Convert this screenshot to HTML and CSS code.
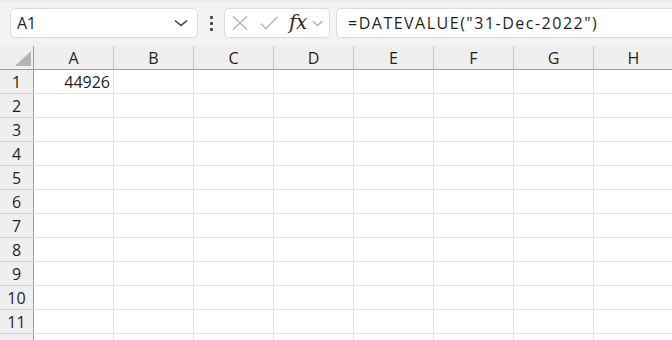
FILE: index.html
```html
<!DOCTYPE html>
<html>
<head>
<meta charset="utf-8">
<link rel="stylesheet" href="styles.css">
</head>
<body>
<div class="app">
  <div class="toolbar">
    <div class="namebox">
      <span class="name">A1</span>
      <svg class="chev" width="14" height="8" viewBox="0 0 14 8"><path d="M1 1.5 L7 6.5 L13 1.5" fill="none" stroke="#3a3a3a" stroke-width="1.4"/></svg>
    </div>
    <div class="dots"><span></span><span></span><span></span></div>
    <div class="iconbox">
      <svg class="ic" width="16" height="14" viewBox="0 0 16 14"><path d="M1 0.5 L15 13.5 M15 0.5 L1 13.5" stroke="#b4b4b4" stroke-width="1.3" fill="none"/></svg>
      <svg class="ic ck" width="18" height="14" viewBox="0 0 18 14"><path d="M0.8 7.5 L6 12.8 L17.2 1" stroke="#b4b4b4" stroke-width="1.3" fill="none"/></svg>
      <span class="fx">fx</span>
      <svg class="chev2" width="11" height="7" viewBox="0 0 11 7"><path d="M0.8 1.2 L5.5 5.5 L10.2 1.2" fill="none" stroke="#a8a8a8" stroke-width="1.2"/></svg>
    </div>
    <div class="formula">=DATEVALUE("31-Dec-2022")</div>
  </div>
  <div class="grid">
    <div class="corner"><div class="tri"></div></div>
    <div class="ch">A</div><div class="ch">B</div><div class="ch">C</div><div class="ch">D</div><div class="ch">E</div><div class="ch">F</div><div class="ch">G</div><div class="ch">H</div>
    <div class="rh">1</div><div class="c num">44926</div><div class="c"></div><div class="c"></div><div class="c"></div><div class="c"></div><div class="c"></div><div class="c"></div><div class="c"></div>
    <div class="rh">2</div><div class="c"></div><div class="c"></div><div class="c"></div><div class="c"></div><div class="c"></div><div class="c"></div><div class="c"></div><div class="c"></div>
    <div class="rh">3</div><div class="c"></div><div class="c"></div><div class="c"></div><div class="c"></div><div class="c"></div><div class="c"></div><div class="c"></div><div class="c"></div>
    <div class="rh">4</div><div class="c"></div><div class="c"></div><div class="c"></div><div class="c"></div><div class="c"></div><div class="c"></div><div class="c"></div><div class="c"></div>
    <div class="rh">5</div><div class="c"></div><div class="c"></div><div class="c"></div><div class="c"></div><div class="c"></div><div class="c"></div><div class="c"></div><div class="c"></div>
    <div class="rh">6</div><div class="c"></div><div class="c"></div><div class="c"></div><div class="c"></div><div class="c"></div><div class="c"></div><div class="c"></div><div class="c"></div>
    <div class="rh">7</div><div class="c"></div><div class="c"></div><div class="c"></div><div class="c"></div><div class="c"></div><div class="c"></div><div class="c"></div><div class="c"></div>
    <div class="rh">8</div><div class="c"></div><div class="c"></div><div class="c"></div><div class="c"></div><div class="c"></div><div class="c"></div><div class="c"></div><div class="c"></div>
    <div class="rh">9</div><div class="c"></div><div class="c"></div><div class="c"></div><div class="c"></div><div class="c"></div><div class="c"></div><div class="c"></div><div class="c"></div>
    <div class="rh">10</div><div class="c"></div><div class="c"></div><div class="c"></div><div class="c"></div><div class="c"></div><div class="c"></div><div class="c"></div><div class="c"></div>
    <div class="rh">11</div><div class="c"></div><div class="c"></div><div class="c"></div><div class="c"></div><div class="c"></div><div class="c"></div><div class="c"></div><div class="c"></div>
    <div class="rh"></div><div class="c"></div><div class="c"></div><div class="c"></div><div class="c"></div><div class="c"></div><div class="c"></div><div class="c"></div><div class="c"></div>
  </div>
</div>
</body>
</html>
```
FILE: styles.css
```css
* { box-sizing: border-box; }
html, body { margin: 0; padding: 0; background: #fff; }
body { width: 672px; height: 340px; overflow: hidden; font-family: "Open Sans", "Noto Sans", sans-serif; color: #1f1f1f; }
.app { width: 672px; height: 340px; overflow: hidden; }

.toolbar {
  height: 46px;
  background: #f3f3f3;
  border-top: 2px solid #ebebeb;
  display: flex;
  align-items: flex-start;
  padding: 6px 0 0 10px;
  white-space: nowrap;
}
.namebox {
  width: 188px;
  height: 30px;
  background: #fff;
  border: 1px solid #dadada;
  border-radius: 5px;
  display: flex;
  align-items: center;
  justify-content: space-between;
  padding: 0 9px 0 6px;
  flex: none;
}
.name { font-size: 16px; color: #1f1f1f; }
.chev { display: block; }
.dots {
  width: 26px;
  height: 30px;
  display: flex;
  flex-direction: column;
  align-items: center;
  justify-content: center;
  gap: 3px;
  flex: none;
}
.dots span { width: 3px; height: 3px; background: #444; border-radius: 1px; display: block; }
.iconbox {
  width: 106px;
  height: 30px;
  background: #fff;
  border: 1px solid #dadada;
  border-radius: 5px;
  display: flex;
  align-items: center;
  padding: 0 0 0 7px;
  flex: none;
}
.ic { display: block; }
.ck { margin-left: 12px; }
.fx {
  font-family: "DejaVu Serif", "Liberation Serif", serif;
  font-style: italic;
  font-size: 20px;
  color: #2a2a2a;
  margin-left: 11px;
  letter-spacing: -0.5px;
  line-height: 1;
  margin-top: -2px;
}
.chev2 { display: block; margin-left: 5px; }
.formula {
  margin-left: 6px;
  width: 400px;
  height: 30px;
  background: #fff;
  border: 1px solid #dadada;
  border-radius: 5px;
  padding: 0 0 0 11px;
  font-size: 16px;
  line-height: 28px;
  letter-spacing: 1.5px;
  color: #1f1f1f;
  flex: none;
}

.grid {
  display: grid;
  grid-template-columns: 34px repeat(8, 80px);
  grid-auto-rows: 24px;
  font-size: 16px;
}
.corner {
  background: #efefef;
  border-right: 1px solid #9f9f9f;
  border-bottom: 1px solid #9f9f9f;
  position: relative;
}
.tri {
  position: absolute;
  right: 2px;
  bottom: 3px;
  width: 0; height: 0;
  border-left: 16px solid transparent;
  border-bottom: 15px solid #b5b5b5;
}
.ch {
  background: #efefef;
  border-right: 1px solid #c9c9c9;
  border-bottom: 1px solid #9f9f9f;
  display: flex;
  align-items: center;
  justify-content: center;
  color: #1f1f1f;
  padding-top: 1px;
}
.rh {
  background: #efefef;
  border-right: 1px solid #9f9f9f;
  border-bottom: 1px solid #d4d4d4;
  display: flex;
  align-items: center;
  justify-content: center;
  color: #1f1f1f;
}
.c {
  border-right: 1px solid #e1e1e1;
  border-bottom: 1px solid #e1e1e1;
}
.num {
  display: flex;
  align-items: center;
  justify-content: flex-end;
  padding-right: 3px;
}
```
